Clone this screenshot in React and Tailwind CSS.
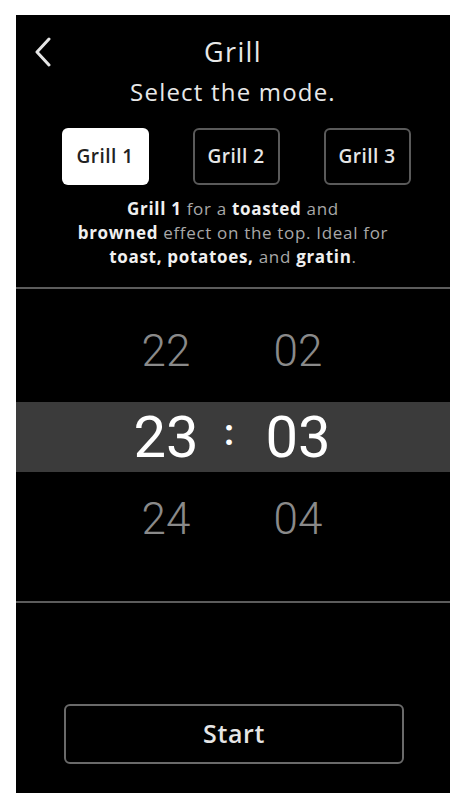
import { useState } from 'react';

const headFont = { fontFamily: '"Open Sans", "Liberation Sans", sans-serif' };

const Picker = () => (
    <div className="h-[312px] flex flex-col pt-[22px]" style={{ fontFamily: 'Roboto, "Liberation Sans", sans-serif' }}>
        <div className="h-[80px] flex items-center justify-center text-[#8a8a8a] text-[44px] font-light">
            <div className="flex items-center pl-[4px]">
                <span className="w-[92px] text-center">22</span>
                <span className="w-[34px]" />
                <span className="w-[104px] text-center">02</span>
            </div>
        </div>
        <div className="mt-[11px] h-[70px] bg-[#3b3b3b] flex items-center justify-center text-white text-[58px]">
            <div className="flex items-center pl-[4px]">
                <span className="w-[92px] text-center">23</span>
                <span className="w-[34px] text-center text-[36px] -mt-[8px] font-bold">:</span>
                <span className="w-[104px] text-center">03</span>
            </div>
        </div>
        <div className="h-[94px] flex items-center justify-center text-[#8a8a8a] text-[44px] font-light">
            <div className="flex items-center pl-[4px]">
                <span className="w-[92px] text-center">24</span>
                <span className="w-[34px]" />
                <span className="w-[104px] text-center">04</span>
            </div>
        </div>
    </div>
);

const b = 'text-[#f0f0f0] font-bold';

const App = () => {
    const [mode, setMode] = useState(1);

    return (
        <div className="w-[457px] h-[795px] bg-white pt-[15px] pl-[16px] pr-[7px] overflow-hidden">
            <div className="h-[778px] bg-black flex flex-col" style={headFont}>
                {/* Header */}
                <div className="relative h-[50px] flex items-end justify-center">
                    <svg className="absolute left-[17px] top-[22px]" width="20" height="30" viewBox="0 0 20 30" fill="none">
                        <path d="M16 2 L4 15 L16 28" stroke="#e5e5e5" strokeWidth="3" strokeLinecap="round" strokeLinejoin="round" />
                    </svg>
                    <h1 className="text-[27px] leading-none text-[#e8e8e8] tracking-wider">Grill</h1>
                </div>
                <p className="mt-[15px] text-center text-[24px] leading-none text-[#e8e8e8] tracking-wider">Select the mode.</p>

                {/* Mode buttons */}
                <div className="mt-[24px] flex justify-center gap-[44px] pl-[6px]">
                    {[1, 2, 3].map((n) => (
                        <button
                            key={n}
                            onClick={() => setMode(n)}
                            className={`w-[87px] h-[57px] rounded-[6px] text-[19px] tracking-wide font-semibold ${mode === n ? 'bg-white text-[#222]' : 'border-2 border-[#5a5a5a] text-[#e6e6e6]'}`}
                        >
                            Grill {n}
                        </button>
                    ))}
                </div>

                {/* Description */}
                <p className="mt-[12px] text-center text-[17px] leading-[24px] tracking-[0.04em] text-[#a8a8a8] whitespace-nowrap">
                    <b className={b}>Grill 1</b> for a <b className={b}>toasted</b> and
                    <br />
                    <b className={b}>browned</b> effect on the top. Ideal for
                    <br />
                    <b className={b}>toast, potatoes,</b> and <b className={b}>gratin</b>.
                </p>

                <div className="mt-[18px] h-[2px] bg-[#5c5c5c]" />

                <Picker />

                <div className="h-[2px] bg-[#5c5c5c]" />

                {/* Start */}
                <div className="flex-1 flex items-end justify-center pb-[29px] pl-[2px]">
                    <button className="w-[340px] h-[60px] rounded-[6px] border-2 border-[#6a6a6a] text-[25px] tracking-wide font-semibold text-[#e6e6e6]">
                        Start
                    </button>
                </div>
            </div>
        </div>
    );
};

export default App;
